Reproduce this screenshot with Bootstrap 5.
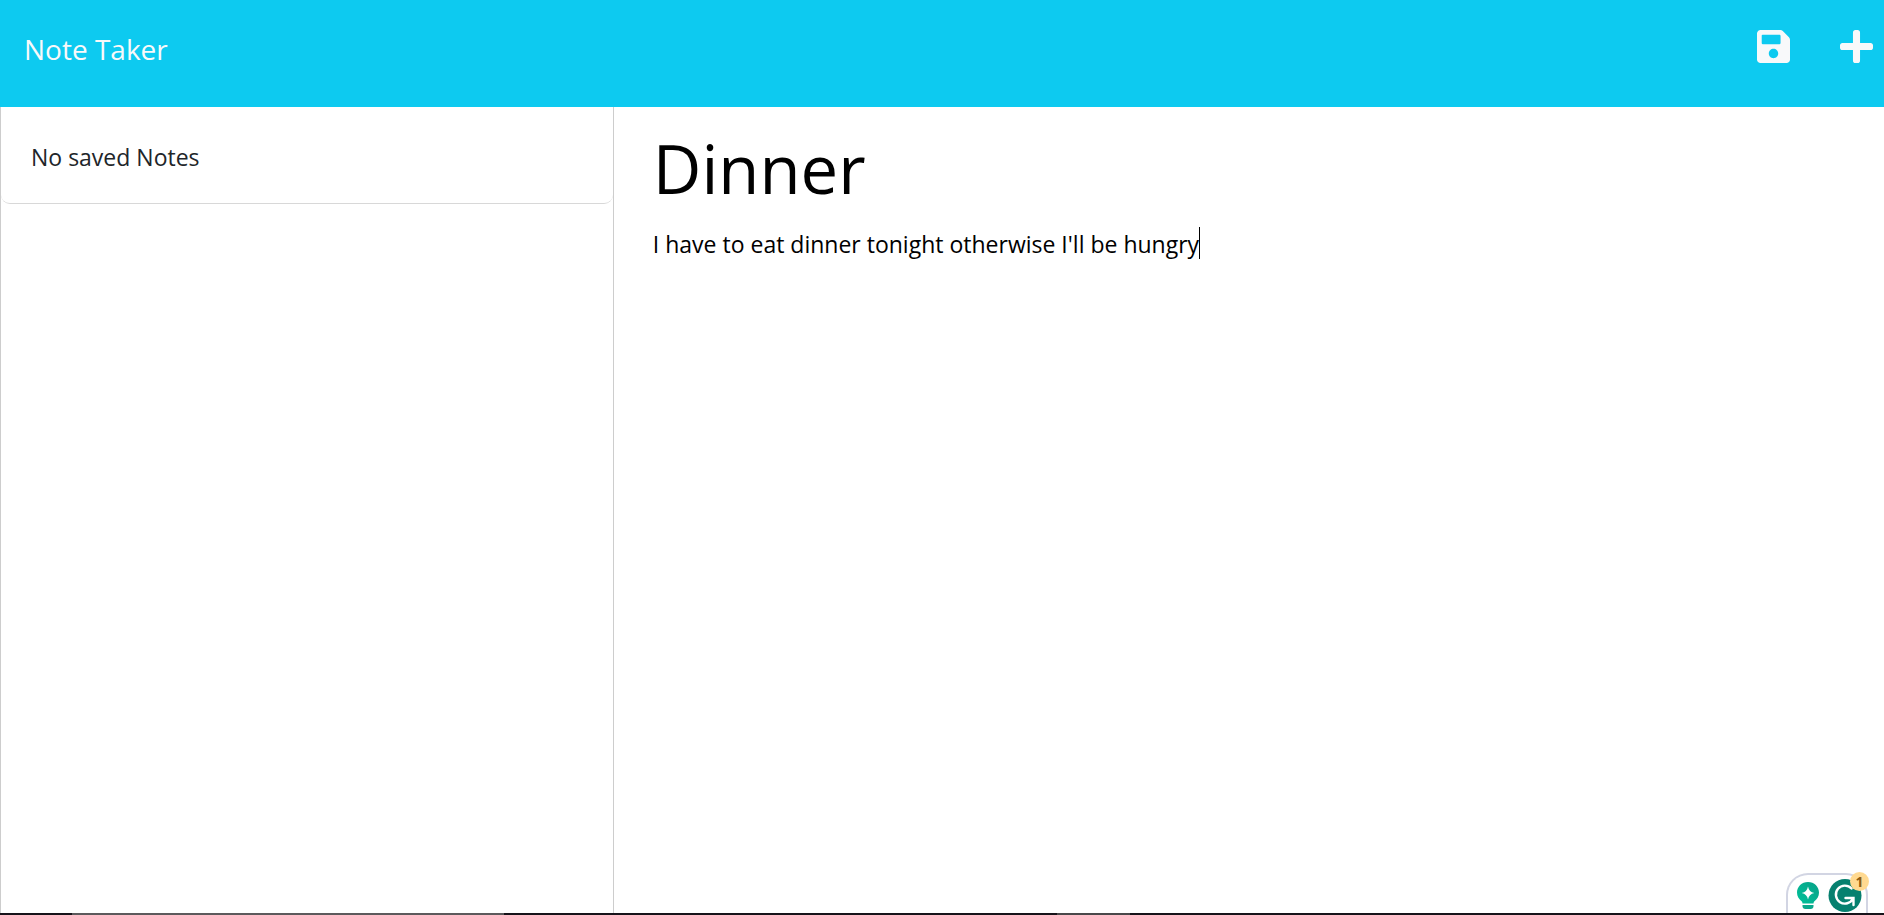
<!DOCTYPE html>
<html lang="en">
<head>
<meta charset="utf-8">
<meta name="viewport" content="width=device-width, initial-scale=1">
<title>Note Taker</title>
<link href="https://cdn.jsdelivr.net/npm/bootstrap@5.3.0/dist/css/bootstrap.min.css" rel="stylesheet">
<style>
  body { font-family: "Open Sans", "Noto Sans", sans-serif; font-size: 23px; line-height: 36px; }
  .topbar { height: 107px; padding: 24px 11px 0 24px; background: #0dcaf0; }
  .brand { font-size: 28px; line-height: 50px; color: #f8f9fa; }
  .tool { width: 34px; height: 38px; padding: 0; margin-top: 3px; color: #f8f9fa; }
  .tool svg { display: block; width: 33px; height: 33px; margin: auto; }
  .tools { gap: 49px; }
  .sidebar { width: 32.58%; border: 1px solid #cdcdcd; border-width: 0 1px; }
  .saved { border-bottom: 1px solid #d8d8d8; border-radius: 0 0 9px 9px; margin: 0; }
  .saved li { padding: 32px 30px 28px; color: #212529; }
  .editor { padding: 15px 36px 0 39px; }
  .field { display: block; width: 100%; border: 0; outline: 0; padding: 0; color: #000; background: none; font: inherit; }
  .field-title { font-size: 67px; line-height: 92px; height: 92px; }
  .note-body { margin-top: 12px; }
  .field-text { resize: none; height: 400px; }
  .caret { left: 546px; top: 1px; width: 1px; height: 32px; background: #000; }
  .helper { right: 16px; bottom: 2px; width: 82px; height: 40px; border: 2px solid #d2d5e3; border-bottom: 0; border-radius: 22px 22px 0 0; background: #fff; }
  .helper svg { display: block; position: absolute; left: -2px; bottom: 0; overflow: visible; }
  .count { right: -3px; top: -3px; width: 19px; height: 19px; border-radius: 50%; background: #ffd990; color: #8c5a10; font-size: 14px; line-height: 19px; font-weight: 700; }
  .edge { height: 2px; background: linear-gradient(90deg, #17131a 3.82%, #5c5a5c 3.82% 26.75%, #17131a 26.75% 56.1%, #4a484a 56.1% 60%, #17131a 60%); }
</style>
</head>
<body class="vh-100 d-flex flex-column overflow-hidden position-relative">
  <nav class="topbar d-flex justify-content-between align-items-start flex-shrink-0">
    <a class="brand text-decoration-none" href="#">Note Taker</a>
    <div class="tools d-flex">
      <button class="tool btn border-0" type="button" aria-label="Save note">
        <svg viewBox="0 32 448 448" fill="currentColor"><path d="M433.941 129.941l-83.882-83.882A48 48 0 0 0 316.118 32H48C21.49 32 0 53.49 0 80v352c0 26.51 21.49 48 48 48h352c26.51 0 48-21.49 48-48V163.882a48 48 0 0 0-14.059-33.941zM224 416c-35.346 0-64-28.654-64-64 0-35.346 28.654-64 64-64s64 28.654 64 64c0 35.346-28.654 64-64 64zm96-304.52V212c0 6.627-5.373 12-12 12H76c-6.627 0-12-5.373-12-12V108c0-6.627 5.373-12 12-12h228.52c3.183 0 6.235 1.264 8.485 3.515l3.48 3.48A11.996 11.996 0 0 1 320 111.48z"/></svg>
      </button>
      <button class="tool btn border-0" type="button" aria-label="New note">
        <svg viewBox="0 32 448 448" fill="currentColor"><path d="M416 208H272V64c0-17.67-14.33-32-32-32h-32c-17.67 0-32 14.33-32 32v144H32c-17.67 0-32 14.33-32 32v32c0 17.67 14.33 32 32 32h144v144c0 17.67 14.33 32 32 32h32c17.67 0 32-14.33 32-32V304h144c17.67 0 32-14.33 32-32v-32c0-17.67-14.33-32-32-32z"/></svg>
      </button>
    </div>
  </nav>
  <main class="d-flex flex-grow-1 overflow-hidden">
    <aside class="sidebar flex-shrink-0">
      <ul class="saved list-unstyled"><li>No saved Notes</li></ul>
    </aside>
    <section class="editor flex-grow-1">
      <input class="field field-title" type="text" value="Dinner" aria-label="Note title">
      <div class="note-body position-relative">
        <textarea class="field field-text" aria-label="Note text" spellcheck="false">I have to eat dinner tonight otherwise I'll be hungry</textarea>
        <span class="caret position-absolute"></span>
      </div>
    </section>
  </main>
  <div class="helper position-absolute">
    <svg width="82" height="41" viewBox="1786 872 82 41">
      <defs><linearGradient id="bulb" x1="0" y1="1" x2="1" y2="0"><stop offset="0" stop-color="#00c29a"/><stop offset="1" stop-color="#08a087"/></linearGradient></defs>
      <path d="M1808 882c-6.300 0-11 4.700-11 10.600 0 4 2 6.600 4 8.200 1 .8 1.500 1.500 1.500 2.700h11c0-1.200.5-1.900 1.500-2.700 2-1.600 4-4.200 4-8.200 0-5.900-4.700-10.600-11-10.600z" fill="url(#bulb)"/>
      <path d="M1808 886.500q1 5.500 6.300 6.500-5.300 1-6.300 6.500-1-5.500-6.300-6.500 5.300-1 6.300-6.500z" fill="#fff"/>
      <path d="M1802.500 905h11v1a3 3 0 0 1-3 3h-5a3 3 0 0 1-3-3z" fill="#0aa98c"/>
      <circle cx="1845" cy="895.500" r="16.500" fill="#06806f"/>
      <path d="M1851.500 888.500a9 9 0 1 0 1.500 10M1845.500 898h8v7" fill="none" stroke="#fff" stroke-width="2.400" stroke-linecap="round"/>
    </svg>
    <span class="count position-absolute text-center">1</span>
  </div>
  <div class="edge flex-shrink-0"></div>
<script src="https://cdn.jsdelivr.net/npm/bootstrap@5.3.0/dist/js/bootstrap.bundle.min.js"></script>
</body>
</html>
